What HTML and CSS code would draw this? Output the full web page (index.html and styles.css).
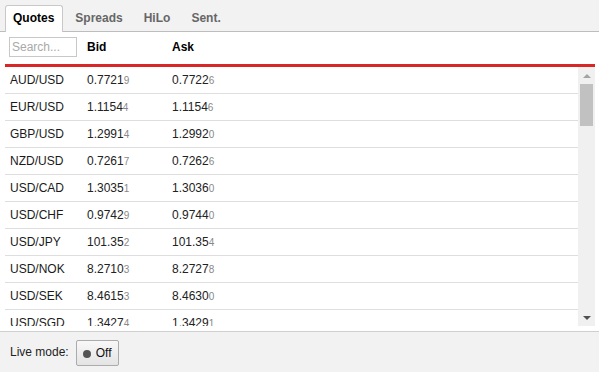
FILE: index.html
```html
<!DOCTYPE html>
<html>
<head>
<meta charset="utf-8">
<link rel="stylesheet" href="styles.css">
</head>
<body>
<div class="app">
  <div class="tabs">
    <div class="tab active">Quotes</div>
    <div class="tab">Spreads</div>
    <div class="tab">HiLo</div>
    <div class="tab">Sent.</div>
  </div>
  <div class="main">
    <div class="header">
      <div class="hcell"><input class="search" type="text" placeholder="Search..."></div>
      <div class="hcell th">Bid</div>
      <div class="hcell th">Ask</div>
    </div>
    <div class="body">
      <div class="rows">
        <div class="row"><span class="pair">AUD/USD</span><span class="px">0.7721<small>9</small></span><span class="px">0.7722<small>6</small></span></div>
        <div class="row"><span class="pair">EUR/USD</span><span class="px">1.1154<small>4</small></span><span class="px">1.1154<small>6</small></span></div>
        <div class="row"><span class="pair">GBP/USD</span><span class="px">1.2991<small>4</small></span><span class="px">1.2992<small>0</small></span></div>
        <div class="row"><span class="pair">NZD/USD</span><span class="px">0.7261<small>7</small></span><span class="px">0.7262<small>6</small></span></div>
        <div class="row"><span class="pair">USD/CAD</span><span class="px">1.3035<small>1</small></span><span class="px">1.3036<small>0</small></span></div>
        <div class="row"><span class="pair">USD/CHF</span><span class="px">0.9742<small>9</small></span><span class="px">0.9744<small>0</small></span></div>
        <div class="row"><span class="pair">USD/JPY</span><span class="px">101.35<small>2</small></span><span class="px">101.35<small>4</small></span></div>
        <div class="row"><span class="pair">USD/NOK</span><span class="px">8.2710<small>3</small></span><span class="px">8.2727<small>8</small></span></div>
        <div class="row"><span class="pair">USD/SEK</span><span class="px">8.4615<small>3</small></span><span class="px">8.4630<small>0</small></span></div>
        <div class="row"><span class="pair">USD/SGD</span><span class="px">1.3427<small>4</small></span><span class="px">1.3429<small>1</small></span></div>
      </div>
      <div class="scrollbar">
        <div class="sb-btn"><span class="arrow-up"></span></div>
        <div class="sb-track"><div class="sb-thumb"></div></div>
        <div class="sb-btn"><span class="arrow-down"></span></div>
      </div>
    </div>
  </div>
  <div class="footer">
    <span class="live-label">Live mode:</span>
    <button class="toggle"><span class="dot"></span>Off</button>
  </div>
</div>
</body>
</html>
```
FILE: styles.css
```css
* { box-sizing: border-box; }
html, body { margin: 0; padding: 0; }
body {
  font-family: "Liberation Sans", Arial, sans-serif;
  font-size: 12px;
  color: #222;
  background: #fff;
}
.app {
  width: 599px;
  height: 372px;
  display: flex;
  flex-direction: column;
  overflow: hidden;
}
.tabs {
  height: 32px;
  flex: none;
  background: #f2f2f2;
  border-bottom: 1px solid #bdbdbd;
  display: flex;
  align-items: flex-end;
  padding-left: 5px;
}
.tab {
  height: 26px;
  line-height: 25px;
  padding: 0 8px 0 7px;
  margin-right: 4px;
  border: 1px solid transparent;
  border-bottom: none;
  font-weight: bold;
  color: #666;
  border-radius: 3px 3px 0 0;
}
.tab.active {
  background: #fff;
  color: #000;
  border-color: #c8c8c8;
  height: 27px;
  margin-bottom: -1px;
}
.main {
  flex: 1;
  display: flex;
  flex-direction: column;
  margin: 0 4px 5px 5px;
  min-height: 0;
}
.header {
  flex: none;
  height: 35px;
  display: grid;
  grid-template-columns: 82px 85px 1fr;
  align-items: start;
  border-bottom: 3px solid #d92626;
  padding-top: 5px;
}
.hcell.th {
  font-weight: bold;
  color: #000;
  line-height: 20px;
}
.search {
  margin: 0 0 0 4px;
  width: 68px;
  height: 20px;
  border: 1px solid #c8c8c8;
  padding: 0 2px;
  font-family: "Liberation Sans", Arial, sans-serif;
  font-size: 12px;
  outline: none;
}
.search::placeholder { color: #a9a9a9; }
.body {
  flex: 1;
  display: flex;
  min-height: 0;
}
.rows {
  flex: 1;
  overflow: hidden;
}
.row {
  display: grid;
  grid-template-columns: 82px 85px 1fr;
  height: 27px;
  align-items: center;
  border-bottom: 1px solid #dedede;
}
.pair { padding-left: 5px; color: #1a1a1a; }
.px { color: #222; }
.px small { font-size: 10px; color: #888; }
.scrollbar {
  width: 17px;
  flex: none;
  background: #f0f0f0;
  display: flex;
  flex-direction: column;
}
.sb-btn {
  height: 17px;
  display: flex;
  align-items: center;
  justify-content: center;
  flex: none;
}
.arrow-up {
  width: 0; height: 0;
  border-left: 4px solid transparent;
  border-right: 4px solid transparent;
  border-bottom: 4px solid #a3a3a3;
}
.arrow-down {
  width: 0; height: 0;
  border-left: 4px solid transparent;
  border-right: 4px solid transparent;
  border-top: 4px solid #505050;
}
.sb-track { flex: 1; padding: 0 2px; }
.sb-thumb {
  height: 42px;
  background: #c1c1c1;
}
.footer {
  flex: none;
  height: 41px;
  background: #f2f2f2;
  border-top: 1px solid #cfcfcf;
  display: flex;
  align-items: center;
  padding-left: 10px;
  gap: 7px;
}
.live-label { color: #222; }
.toggle {
  height: 26px;
  padding: 0 6px;
  border: 1px solid #ababab;
  border-radius: 2px;
  background: linear-gradient(#f8f8f8, #e4e4e4);
  font-family: "Liberation Sans", Arial, sans-serif;
  font-size: 12px;
  color: #111;
  display: flex;
  align-items: center;
  gap: 5px;
  margin-top: 1px;
}
.dot {
  width: 8px;
  height: 8px;
  border-radius: 50%;
  background: #555;
  margin-top: 3px;
}
```
